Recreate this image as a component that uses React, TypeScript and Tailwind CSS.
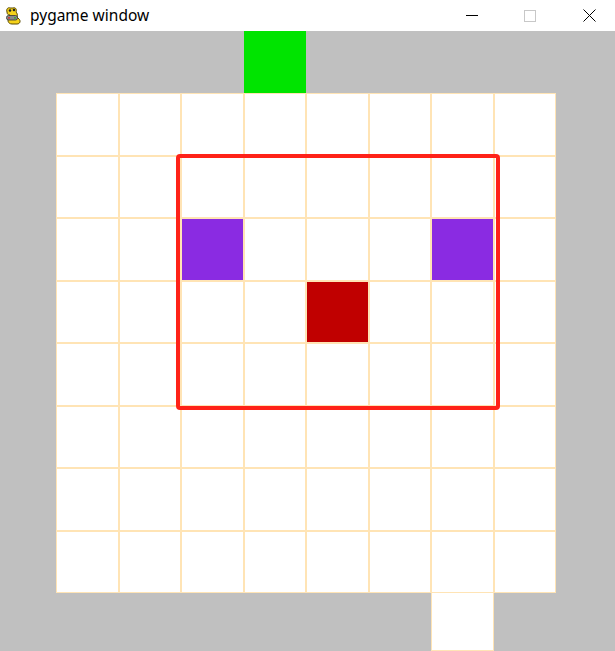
import React from "react";

function PygameIcon() {
  return (
    <svg width="18" height="20" viewBox="0 0 18 20">
      <path d="M5 2 C 3 1, 1 3, 2 6 C 2 8, 3 9, 5 9 L 4 12 C 2 14, 3 18, 7 18 L 12 18 C 15 18, 16 15, 14 13 L 12 11 C 13 9, 12 7, 11 6 C 12 4, 11 1, 8 2 Z" fill="#f5d21a" stroke="#5a4a00" strokeWidth="1" />
      <circle cx="5" cy="4.5" r="1.3" fill="#222" />
      <circle cx="9" cy="4" r="1.3" fill="#222" />
      <rect x="1.5" y="9.5" width="11" height="4.5" rx="2" fill="#8a8a8a" stroke="#333" strokeWidth="0.8" />
      <circle cx="4" cy="11.8" r="0.9" fill="#d22" />
      <circle cx="10" cy="11.8" r="0.9" fill="#2a2" />
    </svg>
  );
}

function TitleBar() {
  return (
    <div className="flex h-[31px] items-center bg-white">
      <div className="ml-[4px] flex w-[20px] items-center justify-center">
        <PygameIcon />
      </div>
      <div
        className="ml-[6px] text-[15.5px] leading-none text-black"
        style={{ fontFamily: '"Noto Sans", "Open Sans", sans-serif' }}
      >
        pygame window
      </div>
      <div className="ml-auto flex h-full items-center">
        <div className="flex h-full w-[50px] items-center justify-center">
          <div className="h-[1px] w-[12px] bg-black" />
        </div>
        <div className="flex h-full w-[66px] items-center justify-center">
          <div className="h-[12px] w-[12px] border border-[#c8c8c8]" />
        </div>
        <div className="flex h-full w-[52px] items-center justify-center">
          <svg width="13" height="13" viewBox="0 0 13 13">
            <path d="M0.5 0.5 L12.5 12.5 M12.5 0.5 L0.5 12.5" stroke="#000" strokeWidth="1" />
          </svg>
        </div>
      </div>
    </div>
  );
}

const pieces: Record<string, string> = {
  "2-2": "bg-[#8a2be2]",
  "2-6": "bg-[#8a2be2]",
  "3-4": "bg-[#c00000]",
};

function Board() {
  const cells = [];
  for (let r = 0; r < 8; r++) {
    for (let c = 0; c < 8; c++) {
      const p = pieces[`${r}-${c}`];
      cells.push(
        <div
          key={`${r}-${c}`}
          className={`border-[1.5px] border-[#ffe4b5] ${p ? p : "bg-white"}`}
        />
      );
    }
  }
  return (
    <div className="relative h-[500px] w-[500px]">
      <div className="grid h-full w-full grid-cols-8 grid-rows-8">{cells}</div>
      <div className="absolute left-[120px] top-[61px] h-[256px] w-[324px] rounded-[4px] border-[4px] border-[#ff2218]" />
    </div>
  );
}

export default function App() {
  return (
    <div className="h-[651px] w-[615px] overflow-hidden bg-white">
      <TitleBar />
      <div className="flex h-[620px] flex-col bg-[#c0c0c0] pl-[56px]">
        <div className="flex h-[62px]">
          <div className="ml-[188px] h-full w-[62px] bg-[#00e400]" />
        </div>
        <Board />
        <div className="flex h-[58px]">
          <div className="ml-[375px] h-full w-[62.5px] border-[1.5px] border-t-0 border-[#ffe4b5] bg-white" />
        </div>
      </div>
    </div>
  );
}
